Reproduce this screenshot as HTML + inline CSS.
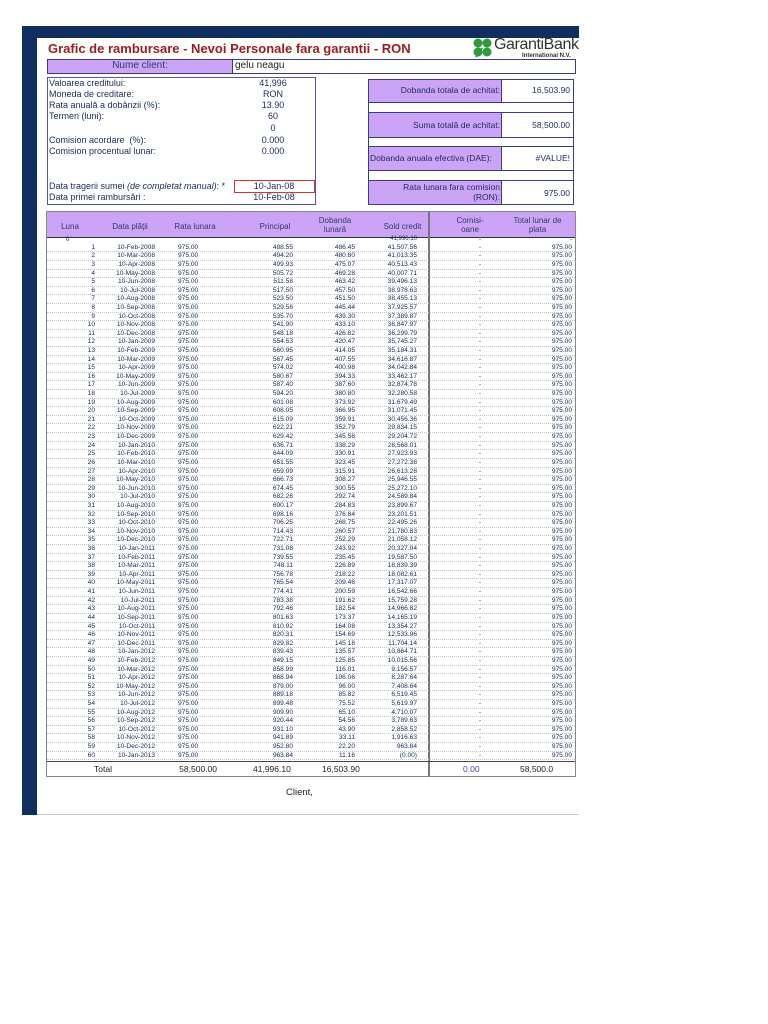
<!DOCTYPE html>
<html><head><meta charset="utf-8">
<style>
*{margin:0;padding:0;box-sizing:border-box}
body{width:768px;height:1024px;background:#fff;position:relative;font-family:"Liberation Sans",sans-serif;color:#1b2c5c;overflow:hidden}
.abs{position:absolute}
.nv{background:#0f2f60}
.pur{background:#cba4f7}
.t{position:absolute;font-size:9px;white-space:nowrap;color:#1b2c5c}
#rows{position:absolute;left:0;top:243.7px;width:768px}
.r{position:relative;height:8.61px;font-size:6.6px;line-height:8.61px;color:#15285a}
.r:after{content:"";position:absolute;left:47px;width:528px;bottom:0;border-bottom:1px dotted #c4c4cc}
.r i{font-style:normal;position:absolute;top:0;white-space:nowrap}
.a{left:60px;width:35px;text-align:right}
.b{left:100px;width:55px;text-align:right}
.c{left:178px}
.d{left:240px;width:53px;text-align:right}
.e{left:310px;width:45px;text-align:right}
.f{left:360px;width:57px;text-align:right}
.g{left:470px;width:20px;text-align:center}
.h{left:530px;width:42px;text-align:right}
.hd{position:absolute;font-size:8px;color:#333a6a;text-align:center;line-height:9px}
</style></head><body>
<div class="abs nv" style="left:22px;top:26px;width:557px;height:12px"></div>
<div class="abs nv" style="left:22px;top:26px;width:15px;height:789px"></div>
<div class="abs" style="left:37px;top:814px;width:542px;height:1px;background:#ccc"></div>

<div class="t" style="left:48px;top:41px;font-size:13px;font-weight:bold;color:#9b1c1c">Grafic de rambursare - Nevoi Personale fara garantii - RON</div>
<svg class="abs" style="left:472px;top:38px" width="22" height="20" viewBox="0 0 22 20"><g fill="#2e9a3a"><circle cx="6" cy="5" r="4.5"/><circle cx="15" cy="5" r="4.5"/><circle cx="6" cy="14" r="4.5"/><circle cx="15" cy="14" r="4.5"/></g><path d="M10 10 L4 19" stroke="#2e9a3a" stroke-width="2"/></svg>
<div class="t" style="left:494px;top:36px;font-size:16px;letter-spacing:-0.4px;color:#333">GarantiBank</div>
<div class="t" style="left:522px;top:53px;font-size:6px;font-weight:bold;color:#333">International N.V.</div>

<div class="abs" style="left:47px;top:59px;width:529px;height:15px;border:1px solid #3a3a8a"></div>
<div class="abs pur" style="left:48px;top:60px;width:184px;height:13px"></div>
<div class="abs" style="left:232px;top:60px;width:1px;height:13px;background:#3a3a8a"></div>
<div class="t" style="left:48px;top:60px;width:184px;text-align:center;font-size:10px;color:#333a6a">Nume client:</div>
<div class="t" style="left:235px;top:60px;font-size:10px;color:#222">gelu neagu</div>

<div class="abs" style="left:47px;top:77px;width:269px;height:128px;border:1px solid #55559a"></div>
<div class="t" style="left:49px;top:78px">Valoarea creditului:</div><div class="t" style="left:233px;top:78px;width:80px;text-align:center">41,996</div>
<div class="t" style="left:49px;top:89px">Moneda de creditare:</div><div class="t" style="left:233px;top:89px;width:80px;text-align:center">RON</div>
<div class="t" style="left:49px;top:100px">Rata anuală a dobânzii (%):</div><div class="t" style="left:233px;top:100px;width:80px;text-align:center">13.90</div>
<div class="t" style="left:49px;top:111px">Termen (luni):</div><div class="t" style="left:233px;top:111px;width:80px;text-align:center">60</div>
<div class="t" style="left:233px;top:123px;width:80px;text-align:center">0</div>
<div class="t" style="left:49px;top:135px">Comision acordare &nbsp;(%):</div><div class="t" style="left:233px;top:135px;width:80px;text-align:center">0.000</div>
<div class="t" style="left:49px;top:146px">Comision procentual lunar:</div><div class="t" style="left:233px;top:146px;width:80px;text-align:center">0.000</div>
<div class="t" style="left:49px;top:181px">Data tragerii sumei <i>(de completat manual)</i>: *</div>
<div class="abs" style="left:234px;top:180px;width:81px;height:13px;border:1px solid #e03030"></div>
<div class="t" style="left:234px;top:181px;width:80px;text-align:center">10-Jan-08</div>
<div class="t" style="left:49px;top:192px">Data primei rambursări :</div><div class="t" style="left:234px;top:192px;width:80px;text-align:center">10-Feb-08</div>

<div class="abs" style="left:368px;top:79px;width:206px;height:126px;border:1px solid #3a3a8a"></div>
<div class="abs pur" style="left:369px;top:80px;width:133px;height:22px;border-right:1px solid #3a3a8a"></div>
<div class="abs" style="left:369px;top:102px;width:204px;height:11px;border-top:1px solid #3a3a8a;border-bottom:1px solid #3a3a8a"></div>
<div class="abs pur" style="left:369px;top:113px;width:133px;height:24px;border-right:1px solid #3a3a8a"></div>
<div class="abs" style="left:369px;top:137px;width:204px;height:10px;border-top:1px solid #3a3a8a;border-bottom:1px solid #3a3a8a"></div>
<div class="abs pur" style="left:369px;top:147px;width:133px;height:23px;border-right:1px solid #3a3a8a"></div>
<div class="abs" style="left:369px;top:170px;width:204px;height:11px;border-top:1px solid #3a3a8a;border-bottom:1px solid #3a3a8a"></div>
<div class="abs pur" style="left:369px;top:181px;width:133px;height:23px;border-right:1px solid #3a3a8a"></div>
<div class="t" style="left:369px;top:85px;width:131px;text-align:right;font-size:8.5px">Dobanda totala de achitat:</div>
<div class="t" style="left:503px;top:85px;width:67px;text-align:right;font-size:8.5px">16,503.90</div>
<div class="t" style="left:369px;top:120px;width:131px;text-align:right;font-size:8.5px">Suma totală de achitat:</div>
<div class="t" style="left:503px;top:120px;width:67px;text-align:right;font-size:8.5px">58,500.00</div>
<div class="t" style="left:370px;top:153px;width:131px;font-size:8.5px">Dobanda anuala efectiva (DAE):</div>
<div class="t" style="left:503px;top:153px;width:67px;text-align:right;font-size:8.5px">#VALUE!</div>
<div class="t" style="left:369px;top:182px;width:131px;text-align:right;font-size:8.5px;line-height:10px">Rata lunara fara comision<br>(RON):</div>
<div class="t" style="left:503px;top:188px;width:67px;text-align:right;font-size:8.5px">975.00</div>

<!-- table -->
<div class="abs pur" style="left:47px;top:212px;width:528px;height:26px;border-bottom:1px solid #333"></div>
<div class="abs" style="left:46px;top:211px;width:530px;height:566px;border:1px solid #888"></div>
<div class="abs" style="left:428px;top:211px;width:2px;height:566px;background:#777"></div>
<div class="hd" style="left:55px;top:222px;width:30px">Luna</div>
<div class="hd" style="left:100px;top:222px;width:60px">Data plății</div>
<div class="hd" style="left:165px;top:222px;width:60px">Rata lunara</div>
<div class="hd" style="left:240px;top:222px;width:70px">Principal</div>
<div class="hd" style="left:310px;top:216px;width:50px">Dobanda<br>lunară</div>
<div class="hd" style="left:370px;top:222px;width:65px">Sold credit</div>
<div class="hd" style="left:445px;top:216px;width:50px">Comisi-<br>oane</div>
<div class="hd" style="left:500px;top:216px;width:75px">Total lunar de<br>plata</div>

<div class="abs" style="left:0;top:236px;width:768px;height:8px;font-size:6px;line-height:8px">
<span class="abs" style="left:66px;top:0">0</span>
<span class="abs" style="left:360px;width:57px;text-align:right;top:-1px">41,996.10</span>
<span class="abs" style="left:470px;width:20px;text-align:center">-</span>
<span class="abs" style="left:530px;width:42px;text-align:right">-</span>
</div>

<div id="rows">
<div class="r"><i class=a>1</i><i class=b>10-Feb-2008</i><i class=c>975.00</i><i class=d>488.55</i><i class=e>486.45</i><i class=f>41,507.56</i><i class=g>-</i><i class=h>975.00</i></div>
<div class="r"><i class=a>2</i><i class=b>10-Mar-2008</i><i class=c>975.00</i><i class=d>494.20</i><i class=e>480.80</i><i class=f>41,013.35</i><i class=g>-</i><i class=h>975.00</i></div>
<div class="r"><i class=a>3</i><i class=b>10-Apr-2008</i><i class=c>975.00</i><i class=d>499.93</i><i class=e>475.07</i><i class=f>40,513.43</i><i class=g>-</i><i class=h>975.00</i></div>
<div class="r"><i class=a>4</i><i class=b>10-May-2008</i><i class=c>975.00</i><i class=d>505.72</i><i class=e>469.28</i><i class=f>40,007.71</i><i class=g>-</i><i class=h>975.00</i></div>
<div class="r"><i class=a>5</i><i class=b>10-Jun-2008</i><i class=c>975.00</i><i class=d>511.58</i><i class=e>463.42</i><i class=f>39,496.13</i><i class=g>-</i><i class=h>975.00</i></div>
<div class="r"><i class=a>6</i><i class=b>10-Jul-2008</i><i class=c>975.00</i><i class=d>517.50</i><i class=e>457.50</i><i class=f>38,978.63</i><i class=g>-</i><i class=h>975.00</i></div>
<div class="r"><i class=a>7</i><i class=b>10-Aug-2008</i><i class=c>975.00</i><i class=d>523.50</i><i class=e>451.50</i><i class=f>38,455.13</i><i class=g>-</i><i class=h>975.00</i></div>
<div class="r"><i class=a>8</i><i class=b>10-Sep-2008</i><i class=c>975.00</i><i class=d>529.56</i><i class=e>445.44</i><i class=f>37,925.57</i><i class=g>-</i><i class=h>975.00</i></div>
<div class="r"><i class=a>9</i><i class=b>10-Oct-2008</i><i class=c>975.00</i><i class=d>535.70</i><i class=e>439.30</i><i class=f>37,389.87</i><i class=g>-</i><i class=h>975.00</i></div>
<div class="r"><i class=a>10</i><i class=b>10-Nov-2008</i><i class=c>975.00</i><i class=d>541.90</i><i class=e>433.10</i><i class=f>36,847.97</i><i class=g>-</i><i class=h>975.00</i></div>
<div class="r"><i class=a>11</i><i class=b>10-Dec-2008</i><i class=c>975.00</i><i class=d>548.18</i><i class=e>426.82</i><i class=f>36,299.79</i><i class=g>-</i><i class=h>975.00</i></div>
<div class="r"><i class=a>12</i><i class=b>10-Jan-2009</i><i class=c>975.00</i><i class=d>554.53</i><i class=e>420.47</i><i class=f>35,745.27</i><i class=g>-</i><i class=h>975.00</i></div>
<div class="r"><i class=a>13</i><i class=b>10-Feb-2009</i><i class=c>975.00</i><i class=d>560.95</i><i class=e>414.05</i><i class=f>35,184.31</i><i class=g>-</i><i class=h>975.00</i></div>
<div class="r"><i class=a>14</i><i class=b>10-Mar-2009</i><i class=c>975.00</i><i class=d>567.45</i><i class=e>407.55</i><i class=f>34,616.87</i><i class=g>-</i><i class=h>975.00</i></div>
<div class="r"><i class=a>15</i><i class=b>10-Apr-2009</i><i class=c>975.00</i><i class=d>574.02</i><i class=e>400.98</i><i class=f>34,042.84</i><i class=g>-</i><i class=h>975.00</i></div>
<div class="r"><i class=a>16</i><i class=b>10-May-2009</i><i class=c>975.00</i><i class=d>580.67</i><i class=e>394.33</i><i class=f>33,462.17</i><i class=g>-</i><i class=h>975.00</i></div>
<div class="r"><i class=a>17</i><i class=b>10-Jun-2009</i><i class=c>975.00</i><i class=d>587.40</i><i class=e>387.60</i><i class=f>32,874.78</i><i class=g>-</i><i class=h>975.00</i></div>
<div class="r"><i class=a>18</i><i class=b>10-Jul-2009</i><i class=c>975.00</i><i class=d>594.20</i><i class=e>380.80</i><i class=f>32,280.58</i><i class=g>-</i><i class=h>975.00</i></div>
<div class="r"><i class=a>19</i><i class=b>10-Aug-2009</i><i class=c>975.00</i><i class=d>601.08</i><i class=e>373.92</i><i class=f>31,679.49</i><i class=g>-</i><i class=h>975.00</i></div>
<div class="r"><i class=a>20</i><i class=b>10-Sep-2009</i><i class=c>975.00</i><i class=d>608.05</i><i class=e>366.95</i><i class=f>31,071.45</i><i class=g>-</i><i class=h>975.00</i></div>
<div class="r"><i class=a>21</i><i class=b>10-Oct-2009</i><i class=c>975.00</i><i class=d>615.09</i><i class=e>359.91</i><i class=f>30,456.36</i><i class=g>-</i><i class=h>975.00</i></div>
<div class="r"><i class=a>22</i><i class=b>10-Nov-2009</i><i class=c>975.00</i><i class=d>622.21</i><i class=e>352.79</i><i class=f>29,834.15</i><i class=g>-</i><i class=h>975.00</i></div>
<div class="r"><i class=a>23</i><i class=b>10-Dec-2009</i><i class=c>975.00</i><i class=d>629.42</i><i class=e>345.58</i><i class=f>29,204.72</i><i class=g>-</i><i class=h>975.00</i></div>
<div class="r"><i class=a>24</i><i class=b>10-Jan-2010</i><i class=c>975.00</i><i class=d>636.71</i><i class=e>338.29</i><i class=f>28,568.01</i><i class=g>-</i><i class=h>975.00</i></div>
<div class="r"><i class=a>25</i><i class=b>10-Feb-2010</i><i class=c>975.00</i><i class=d>644.09</i><i class=e>330.91</i><i class=f>27,923.93</i><i class=g>-</i><i class=h>975.00</i></div>
<div class="r"><i class=a>26</i><i class=b>10-Mar-2010</i><i class=c>975.00</i><i class=d>651.55</i><i class=e>323.45</i><i class=f>27,272.38</i><i class=g>-</i><i class=h>975.00</i></div>
<div class="r"><i class=a>27</i><i class=b>10-Apr-2010</i><i class=c>975.00</i><i class=d>659.09</i><i class=e>315.91</i><i class=f>26,613.28</i><i class=g>-</i><i class=h>975.00</i></div>
<div class="r"><i class=a>28</i><i class=b>10-May-2010</i><i class=c>975.00</i><i class=d>666.73</i><i class=e>308.27</i><i class=f>25,946.55</i><i class=g>-</i><i class=h>975.00</i></div>
<div class="r"><i class=a>29</i><i class=b>10-Jun-2010</i><i class=c>975.00</i><i class=d>674.45</i><i class=e>300.55</i><i class=f>25,272.10</i><i class=g>-</i><i class=h>975.00</i></div>
<div class="r"><i class=a>30</i><i class=b>10-Jul-2010</i><i class=c>975.00</i><i class=d>682.26</i><i class=e>292.74</i><i class=f>24,589.84</i><i class=g>-</i><i class=h>975.00</i></div>
<div class="r"><i class=a>31</i><i class=b>10-Aug-2010</i><i class=c>975.00</i><i class=d>690.17</i><i class=e>284.83</i><i class=f>23,899.67</i><i class=g>-</i><i class=h>975.00</i></div>
<div class="r"><i class=a>32</i><i class=b>10-Sep-2010</i><i class=c>975.00</i><i class=d>698.16</i><i class=e>276.84</i><i class=f>23,201.51</i><i class=g>-</i><i class=h>975.00</i></div>
<div class="r"><i class=a>33</i><i class=b>10-Oct-2010</i><i class=c>975.00</i><i class=d>706.25</i><i class=e>268.75</i><i class=f>22,495.26</i><i class=g>-</i><i class=h>975.00</i></div>
<div class="r"><i class=a>34</i><i class=b>10-Nov-2010</i><i class=c>975.00</i><i class=d>714.43</i><i class=e>260.57</i><i class=f>21,780.83</i><i class=g>-</i><i class=h>975.00</i></div>
<div class="r"><i class=a>35</i><i class=b>10-Dec-2010</i><i class=c>975.00</i><i class=d>722.71</i><i class=e>252.29</i><i class=f>21,058.12</i><i class=g>-</i><i class=h>975.00</i></div>
<div class="r"><i class=a>36</i><i class=b>10-Jan-2011</i><i class=c>975.00</i><i class=d>731.08</i><i class=e>243.92</i><i class=f>20,327.04</i><i class=g>-</i><i class=h>975.00</i></div>
<div class="r"><i class=a>37</i><i class=b>10-Feb-2011</i><i class=c>975.00</i><i class=d>739.55</i><i class=e>235.45</i><i class=f>19,587.50</i><i class=g>-</i><i class=h>975.00</i></div>
<div class="r"><i class=a>38</i><i class=b>10-Mar-2011</i><i class=c>975.00</i><i class=d>748.11</i><i class=e>226.89</i><i class=f>18,839.39</i><i class=g>-</i><i class=h>975.00</i></div>
<div class="r"><i class=a>39</i><i class=b>10-Apr-2011</i><i class=c>975.00</i><i class=d>756.78</i><i class=e>218.22</i><i class=f>18,082.61</i><i class=g>-</i><i class=h>975.00</i></div>
<div class="r"><i class=a>40</i><i class=b>10-May-2011</i><i class=c>975.00</i><i class=d>765.54</i><i class=e>209.46</i><i class=f>17,317.07</i><i class=g>-</i><i class=h>975.00</i></div>
<div class="r"><i class=a>41</i><i class=b>10-Jun-2011</i><i class=c>975.00</i><i class=d>774.41</i><i class=e>200.59</i><i class=f>16,542.66</i><i class=g>-</i><i class=h>975.00</i></div>
<div class="r"><i class=a>42</i><i class=b>10-Jul-2011</i><i class=c>975.00</i><i class=d>783.38</i><i class=e>191.62</i><i class=f>15,759.28</i><i class=g>-</i><i class=h>975.00</i></div>
<div class="r"><i class=a>43</i><i class=b>10-Aug-2011</i><i class=c>975.00</i><i class=d>792.46</i><i class=e>182.54</i><i class=f>14,966.82</i><i class=g>-</i><i class=h>975.00</i></div>
<div class="r"><i class=a>44</i><i class=b>10-Sep-2011</i><i class=c>975.00</i><i class=d>801.63</i><i class=e>173.37</i><i class=f>14,165.19</i><i class=g>-</i><i class=h>975.00</i></div>
<div class="r"><i class=a>45</i><i class=b>10-Oct-2011</i><i class=c>975.00</i><i class=d>810.92</i><i class=e>164.08</i><i class=f>13,354.27</i><i class=g>-</i><i class=h>975.00</i></div>
<div class="r"><i class=a>46</i><i class=b>10-Nov-2011</i><i class=c>975.00</i><i class=d>820.31</i><i class=e>154.69</i><i class=f>12,533.96</i><i class=g>-</i><i class=h>975.00</i></div>
<div class="r"><i class=a>47</i><i class=b>10-Dec-2011</i><i class=c>975.00</i><i class=d>829.82</i><i class=e>145.18</i><i class=f>11,704.14</i><i class=g>-</i><i class=h>975.00</i></div>
<div class="r"><i class=a>48</i><i class=b>10-Jan-2012</i><i class=c>975.00</i><i class=d>839.43</i><i class=e>135.57</i><i class=f>10,864.71</i><i class=g>-</i><i class=h>975.00</i></div>
<div class="r"><i class=a>49</i><i class=b>10-Feb-2012</i><i class=c>975.00</i><i class=d>849.15</i><i class=e>125.85</i><i class=f>10,015.56</i><i class=g>-</i><i class=h>975.00</i></div>
<div class="r"><i class=a>50</i><i class=b>10-Mar-2012</i><i class=c>975.00</i><i class=d>858.99</i><i class=e>116.01</i><i class=f>9,156.57</i><i class=g>-</i><i class=h>975.00</i></div>
<div class="r"><i class=a>51</i><i class=b>10-Apr-2012</i><i class=c>975.00</i><i class=d>868.94</i><i class=e>106.06</i><i class=f>8,287.64</i><i class=g>-</i><i class=h>975.00</i></div>
<div class="r"><i class=a>52</i><i class=b>10-May-2012</i><i class=c>975.00</i><i class=d>879.00</i><i class=e>96.00</i><i class=f>7,408.64</i><i class=g>-</i><i class=h>975.00</i></div>
<div class="r"><i class=a>53</i><i class=b>10-Jun-2012</i><i class=c>975.00</i><i class=d>889.18</i><i class=e>85.82</i><i class=f>6,519.45</i><i class=g>-</i><i class=h>975.00</i></div>
<div class="r"><i class=a>54</i><i class=b>10-Jul-2012</i><i class=c>975.00</i><i class=d>899.48</i><i class=e>75.52</i><i class=f>5,619.97</i><i class=g>-</i><i class=h>975.00</i></div>
<div class="r"><i class=a>55</i><i class=b>10-Aug-2012</i><i class=c>975.00</i><i class=d>909.90</i><i class=e>65.10</i><i class=f>4,710.07</i><i class=g>-</i><i class=h>975.00</i></div>
<div class="r"><i class=a>56</i><i class=b>10-Sep-2012</i><i class=c>975.00</i><i class=d>920.44</i><i class=e>54.56</i><i class=f>3,789.63</i><i class=g>-</i><i class=h>975.00</i></div>
<div class="r"><i class=a>57</i><i class=b>10-Oct-2012</i><i class=c>975.00</i><i class=d>931.10</i><i class=e>43.90</i><i class=f>2,858.52</i><i class=g>-</i><i class=h>975.00</i></div>
<div class="r"><i class=a>58</i><i class=b>10-Nov-2012</i><i class=c>975.00</i><i class=d>941.89</i><i class=e>33.11</i><i class=f>1,916.63</i><i class=g>-</i><i class=h>975.00</i></div>
<div class="r"><i class=a>59</i><i class=b>10-Dec-2012</i><i class=c>975.00</i><i class=d>952.80</i><i class=e>22.20</i><i class=f>963.84</i><i class=g>-</i><i class=h>975.00</i></div>
<div class="r"><i class=a>60</i><i class=b>10-Jan-2013</i><i class=c>975.00</i><i class=d>963.84</i><i class=e>11.16</i><i class=f>(0.00)</i><i class=g>-</i><i class=h>975.00</i></div>
</div>

<div class="abs" style="left:47px;top:761px;width:528px;height:1px;background:#444"></div>
<div class="t" style="left:94px;top:764px;font-size:8.5px;color:#222">Total</div>
<div class="t" style="left:150px;top:764px;width:67px;text-align:right;font-size:8.5px;color:#222">58,500.00</div>
<div class="t" style="left:253px;top:764px;font-size:8.5px;color:#222">41,996.10</div>
<div class="t" style="left:322px;top:764px;font-size:8.5px;color:#222">16,503.90</div>
<div class="t" style="left:463px;top:764px;font-size:8.5px;color:#4444bb">0.00</div>
<div class="t" style="left:520px;top:764px;font-size:8.5px;color:#222">58,500.0</div>

<div class="t" style="left:286px;top:787px;font-size:9.5px;color:#222">Client,</div>
</body></html>
